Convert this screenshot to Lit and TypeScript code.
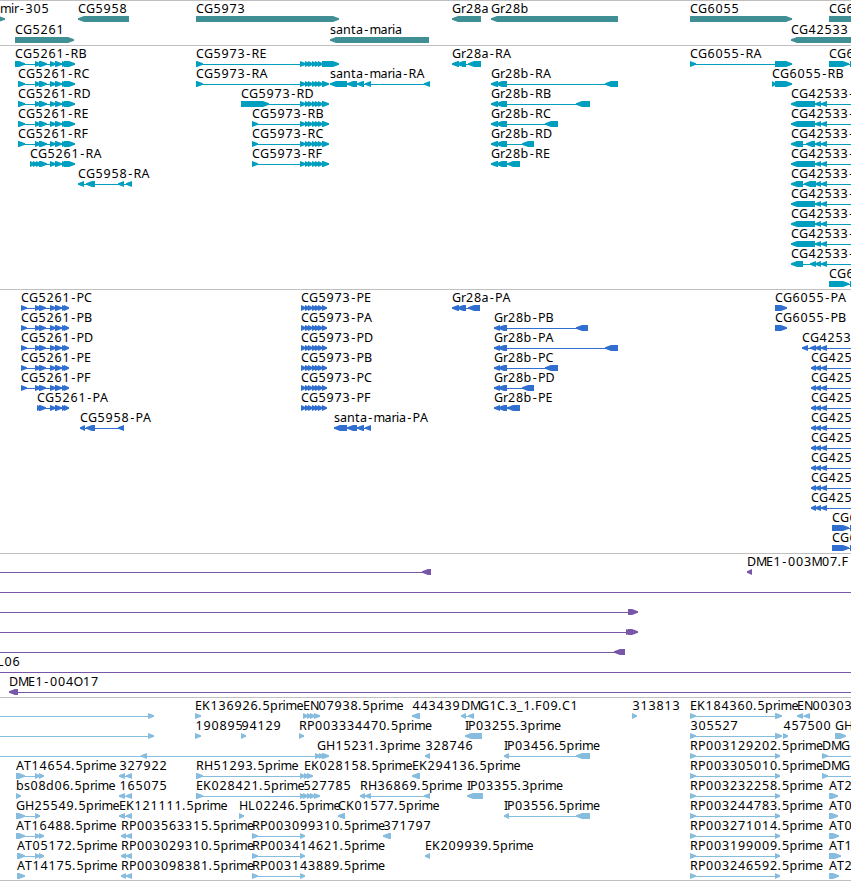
import { LitElement, html, svg, css } from "lit";
import { customElement, property } from "lit/decorators.js";

type Span = [number, number];

interface Feature {
  label: string;
  x: number;
  dir: ">" | "<";
  blocks: Span[];
  line?: Span;
}

interface Track {
  name: string;
  rowHeight: number;
  rows: Feature[][];
}

// glyph advances, digits are 8
const ADVANCES: Record<string, number> = {
  A: 8, B: 8, C: 8, D: 9, E: 7, F: 7, G: 9, H: 9, I: 3, K: 8, L: 7, M: 10,
  O: 9, P: 7.5, R: 8, T: 7, a: 7, b: 8, d: 8, e: 7, i: 3, m: 11, n: 8, p: 8,
  r: 4.5, s: 6, t: 5, "-": 6.5, ".": 4, _: 6,
};

const OFF_LEFT = -10;
const OFF_RIGHT = 870;

// narrow glyphs are centred in their cell
function glyphInset(char: string) {
  if (char === "-") return 1.3;
  return char >= "0" && char <= "9" ? 0.4 : 0;
}

function glyphPositions(label: string, x: number) {
  const positions: number[] = [];
  for (const char of label) {
    positions.push(x + glyphInset(char));
    x += ADVANCES[char] ?? 8;
  }
  return positions.join(" ");
}

function fwd(label: string, x: number, blocks: Span[], line?: Span): Feature {
  return { label, x, dir: ">", blocks, line };
}

function rev(label: string, x: number, blocks: Span[], line?: Span): Feature {
  return { label, x, dir: "<", blocks, line };
}

// exon groups shared by several transcripts
const EX5261: Span[] = [[35, 41], [39, 47], [50, 56], [55, 62], [62, 68], [64, 75]];
const CDS5261: Span[] = [[35, 41], [39, 46], [50, 56], [55, 62], [62, 67], [64, 69]];
const EX5973: Span[] = [[300, 306], [305, 310], [308, 313], [312, 317], [315, 320], [318, 323], [322, 329]];
const CDS5973: Span[] = [[301, 306], [305, 310], [308, 313], [312, 317], [315, 320], [318, 323], [322, 327]];
const EX28B: Span[] = [[491, 498], [496, 507]];
const CDS28B: Span[] = [[494, 500], [498, 507]];
const EX42533: Span[] = [[815, 821], [821, 827]];
const EX6: Span[] = [[829, 849], [850, 870]];
const CDS6: Span[] = [[832, 849], [850, 870]];

const rna5261 = (id: string) => fwd(`CG5261-${id}`, 18, [[18, 25], ...EX5261]);
const pep5261 = (id: string) => fwd(`CG5261-${id}`, 21, [[21, 27], ...CDS5261]);
const rna5973 = (id: string) => fwd(`CG5973-${id}`, 252, [[252, 258], ...EX5973]);
const pep5973 = (id: string) => fwd(`CG5973-${id}`, 301, CDS5973);
const rna28b = (id: string, last: Span) => rev(`Gr28b-${id}`, 491, [...EX28B, last]);
const pep28b = (id: string, last: Span) => rev(`Gr28b-${id}`, 494, [...CDS28B, last]);
const rna42533 = (blocks: Span[] = [[791, 815]]) =>
  rev("CG42533-", 791, [...blocks, ...EX42533], [791, OFF_RIGHT]);
const pep42533 = () => rev("CG425", 811, [[811, 816], ...EX42533], [811, OFF_RIGHT]);
const est690 = (label: string, end = 780) => fwd(label, 690, [[690, 696], [775, end]]);

const TRACKS: Track[] = [
  {
    name: "gene",
    rowHeight: 21,
    rows: [
      [
        fwd("mir-305", 0, [[-10, 5]]),
        rev("CG5958", 78, [[78, 129]]),
        fwd("CG5973", 196, [[196, 339]]),
        rev("Gr28a", 452, [[452, 481]]),
        rev("Gr28b", 491, [[491, 618]]),
        fwd("CG6055", 690, [[690, 792]]),
        fwd("CG6", 829, [[829, 870]]),
      ],
      [
        fwd("CG5261", 15, [[15, 74]]),
        rev("santa-maria", 330, [[330, 429]]),
        rev("CG42533", 791, [[791, 870]]),
      ],
    ],
  },
  {
    name: "transcript",
    rowHeight: 20,
    rows: [
      [
        fwd("CG5261-RB", 15, [[15, 25], ...EX5261]),
        fwd("CG5973-RE", 196, [[196, 203], ...EX5973.slice(0, 6), [322, 339]]),
        rev("Gr28a-RA", 452, [[452, 459], [457, 466], [468, 481]]),
        fwd("CG6055-RA", 690, [[690, 696], [775, 792]]),
        fwd("CG6", 829, EX6),
      ],
      [
        rna5261("RC"),
        fwd("CG5973-RA", 196, [[196, 203], ...EX5973]),
        rev("santa-maria-RA", 330, [[330, 347], [347, 357], [357, 364], [365, 371], [424, 430]]),
        rna28b("RA", [605, 618]),
        fwd("CG6055-RB", 772, [[772, 776], [775, 792]]),
      ],
      [
        rna5261("RD"),
        fwd("CG5973-RD", 241, [[241, 269], ...EX5973]),
        rna28b("RB", [576, 590]),
        rna42533(),
      ],
      [rna5261("RE"), rna5973("RB"), rna28b("RC", [545, 558]), rna42533()],
      [rna5261("RF"), rna5973("RC"), rna28b("RD", [522, 534]), rna42533([[791, 803], [806, 815]])],
      [
        fwd("CG5261-RA", 30, [[30, 35], [33, 38], [36, 41], ...EX5261.slice(1)]),
        rna5973("RF"),
        rna28b("RE", [507, 520]),
        rna42533(),
      ],
      [
        rev("CG5958-RA", 78, [[78, 84], [86, 95], [118, 124], [126, 132]]),
        rna42533([[791, 803], [804, 816]]),
      ],
      [rna42533()],
      [rna42533()],
      [rna42533()],
      [rna42533([[791, 803], [810, 816]])],
      [fwd("CG6", 829, EX6)],
    ],
  },
  {
    name: "protein",
    rowHeight: 20,
    rows: [
      [
        pep5261("PC"),
        pep5973("PE"),
        rev("Gr28a-PA", 452, [[452, 459], [457, 466], [468, 480]]),
        fwd("CG6055-PA", 775, [[775, 787]]),
      ],
      [pep5261("PB"), pep5973("PA"), pep28b("PB", [576, 588]), fwd("CG6055-PB", 775, [[775, 787]])],
      [
        pep5261("PD"),
        pep5973("PD"),
        pep28b("PA", [605, 618]),
        rev("CG4253", 802, [[802, 808], [810, 816], ...EX42533], [802, OFF_RIGHT]),
      ],
      [pep5261("PE"), pep5973("PB"), pep28b("PC", [545, 558]), pep42533()],
      [pep5261("PF"), pep5973("PC"), pep28b("PD", [522, 534]), pep42533()],
      [
        fwd("CG5261-PA", 37, [[37, 42], ...CDS5261.slice(1)]),
        pep5973("PF"),
        pep28b("PE", [507, 520]),
        pep42533(),
      ],
      [
        rev("CG5958-PA", 80, [[80, 85], [86, 95], [118, 124]]),
        rev("santa-maria-PA", 334, [[334, 347], [347, 357], [357, 364], [365, 371]]),
        pep42533(),
      ],
      [pep42533()],
      [pep42533()],
      [pep42533()],
      [pep42533()],
      [fwd("CG6", 832, CDS6)],
      [fwd("CG6", 832, CDS6)],
    ],
  },
  {
    name: "bac",
    rowHeight: 20,
    rows: [
      [
        rev("", 0, [[422, 431]], [OFF_LEFT, 431]),
        rev("DME1-003M07.F", 747, [[747, 752]]),
      ],
      [rev("", 0, [], [OFF_LEFT, OFF_RIGHT])],
      [fwd("", 0, [[628, 638]], [OFF_LEFT, 638])],
      [fwd("", 0, [[626, 632], [628, 638]], [OFF_LEFT, 638])],
      [rev("", 0, [[614, 625]], [OFF_LEFT, 625])],
      [rev("L06", -3, [], [OFF_LEFT, OFF_RIGHT])],
      [rev("DME1-004O17", 9, [[9, 18]], [9, OFF_RIGHT])],
    ],
  },
  {
    name: "est",
    rowHeight: 20,
    rows: [
      [
        fwd("", 0, [[148, 154]], [OFF_LEFT, 154]),
        fwd("EK136926.5prime", 195, [[195, 201]]),
        fwd("EN07938.5prime", 303, [[303, 308], [307, 312], [310, 315], [314, 320]]),
        rev("443439", 412, [[412, 420]]),
        rev("DMG1C.3_1.F09.C1", 461, [[461, 466], [468, 474]]),
        fwd("313813", 632, [[632, 637]]),
        est690("EK184360.5prime", 782),
        rev("EN00303", 797, [[797, 803], [804, 810]]),
      ],
      [
        fwd("", 0, [[148, 154]], [OFF_LEFT, 154]),
        fwd("190895", 195, [[195, 201]]),
        fwd("94129", 241, [[241, 246]]),
        fwd("RP003334470.5prime", 299, [[299, 304]]),
        rev("IP03255.3prime", 465, [[465, 482]]),
        est690("305527", 782),
        fwd("457500", 783, [[783, 788]]),
        fwd("GH", 835, [[835, 846]]),
      ],
      [
        rev("", 0, [[141, 147]], [OFF_LEFT, 316]),
        fwd("GH15231.3prime", 317, [[315, 321], [319, 324], [322, 329]]),
        rev("328746", 425, [[425, 430]]),
        rev("IP03456.5prime", 504, [[504, 509], [576, 590]]),
        est690("RP003129202.5prime"),
        fwd("DMG", 822, [[822, 828]], [822, OFF_RIGHT]),
      ],
      [
        fwd("AT14654.5prime", 16, [[16, 25], [35, 40], [39, 44]]),
        rev("327922", 119, [[119, 125], [126, 132]]),
        fwd("RH51293.5prime", 196, [[196, 203], [300, 305]]),
        fwd("EK028158.5prime", 304, [[304, 309], [307, 313]]),
        rev("EK294136.5prime", 412, [[412, 420]]),
        est690("RP003305010.5prime"),
        fwd("DMG", 822, [[822, 828]], [822, OFF_RIGHT]),
      ],
      [
        fwd("bs08d06.5prime", 16, [[16, 21]]),
        rev("165075", 119, [[119, 125], [126, 132]]),
        fwd("EK028421.5prime", 196, [[196, 203], [300, 305]]),
        fwd("527785", 303, [[303, 308], [307, 312], [310, 315], [314, 320]]),
        rev("RH36869.5prime", 360, [[360, 365], [365, 371], [424, 430]]),
        rev("IP03355.3prime", 467, [[467, 483]]),
        est690("RP003232258.5prime"),
        fwd("AT2", 829, [[829, 838]]),
      ],
      [
        fwd("GH25549.5prime", 16, [[16, 25], [35, 40]]),
        rev("EK121111.5prime", 119, [[119, 125], [126, 132]]),
        fwd("HL02246.5prime", 239, [[239, 244]]),
        rev("CK01577.5prime", 338, [[338, 345]]),
        rev("IP03556.5prime", 504, [[504, 509], [576, 590]]),
        est690("RP003244783.5prime"),
        fwd("AT0", 829, [[829, 838]]),
      ],
      [
        fwd("AT16488.5prime", 16, [[16, 25], [35, 40], [39, 44]]),
        rev("RP003563315.5prime", 121, [[121, 126], [126, 132]]),
        fwd("RP003099310.5prime", 252, [[252, 258], [300, 305]]),
        rev("371797", 383, [[383, 391]]),
        est690("RP003271014.5prime"),
        fwd("AT0", 829, [[829, 839]]),
      ],
      [
        fwd("AT05172.5prime", 17, [[17, 25], [35, 40], [39, 44]]),
        rev("RP003029310.5prime", 121, [[121, 126], [126, 132]]),
        fwd("RP003414621.5prime", 252, [[252, 258], [300, 305]]),
        rev("EK209939.5prime", 425, [[425, 430]]),
        est690("RP003199009.5prime"),
        fwd("AT1", 829, [[829, 841]]),
      ],
      [
        fwd("AT14175.5prime", 17, [[17, 25]]),
        rev("RP003098381.5prime", 121, [[121, 126], [126, 132]]),
        fwd("RP003143889.5prime", 252, [[252, 258], [300, 305]]),
        est690("RP003246592.5prime"),
        fwd("AT2", 829, [[829, 839]]),
      ],
    ],
  },
];

@customElement("feature-row")
export class FeatureRow extends LitElement {
  static styles = css`
    :host {
      display: block;
    }
    .row {
      display: block;
      width: 100%;
      height: 100%;
      overflow: visible;
    }
    .shape {
      fill: var(--feature-color);
    }
    .label {
      font: 12.5px "Noto Sans", "Open Sans", sans-serif;
      fill: #000;
    }
  `;

  @property({ attribute: false }) features: Feature[] = [];

  render() {
    return html`
      <svg class="row">
        ${this.features.map((feature) => this.featureTemplate(feature))}
      </svg>
    `;
  }

  featureTemplate(feature: Feature) {
    const { label, x, dir, blocks } = feature;
    const [start, end] = feature.line ?? [blocks[0][0], blocks[blocks.length - 1][1]];
    return svg`
      <rect class="shape" x=${start} y="18" width=${end - start} height="1"></rect>
      ${blocks.map((block) => this.blockTemplate(block, dir))}
      ${label ? svg`<text class="label" x=${glyphPositions(label, x)} y="12">${label}</text>` : ""}
    `;
  }

  // block with a pointed end; the short ones are just a triangle
  blockTemplate([start, end]: Span, dir: string) {
    const head = Math.min(end - start, 6);
    const points =
      dir === ">"
        ? `${start},15 ${end - head},15 ${end},17.3 ${end},18.7 ${end - head},21 ${start},21`
        : `${end},15 ${start + head},15 ${start},17.3 ${start},18.7 ${start + head},21 ${end},21`;
    return svg`<polygon class="shape" points=${points}></polygon>`;
  }
}

@customElement("app-root")
export class AppRoot extends LitElement {
  static styles = css`
    :host {
      display: block;
      height: 881px;
      overflow: hidden;
      background: #fff;
    }
    .track {
      border-top: 1px solid #c0c0c0;
      padding-bottom: 3px;
    }
    .row20 {
      height: 20px;
    }
    .row21 {
      height: 21px;
    }
    .gene {
      --feature-color: #408f94;
      padding-bottom: 2px;
    }
    .transcript {
      --feature-color: #009fc0;
    }
    .protein {
      --feature-color: #306fcf;
    }
    .bac {
      --feature-color: #7857a8;
    }
    .est {
      --feature-color: #86bcdd;
      padding-bottom: 2px;
      border-bottom: 1px solid #c0c0c0;
    }
  `;

  render() {
    return TRACKS.map(
      (track) => html`
        <section class="track ${track.name}">
          ${track.rows.map(
            (row) => html`<feature-row class="row${track.rowHeight}" .features=${row}></feature-row>`
          )}
        </section>
      `
    );
  }
}
